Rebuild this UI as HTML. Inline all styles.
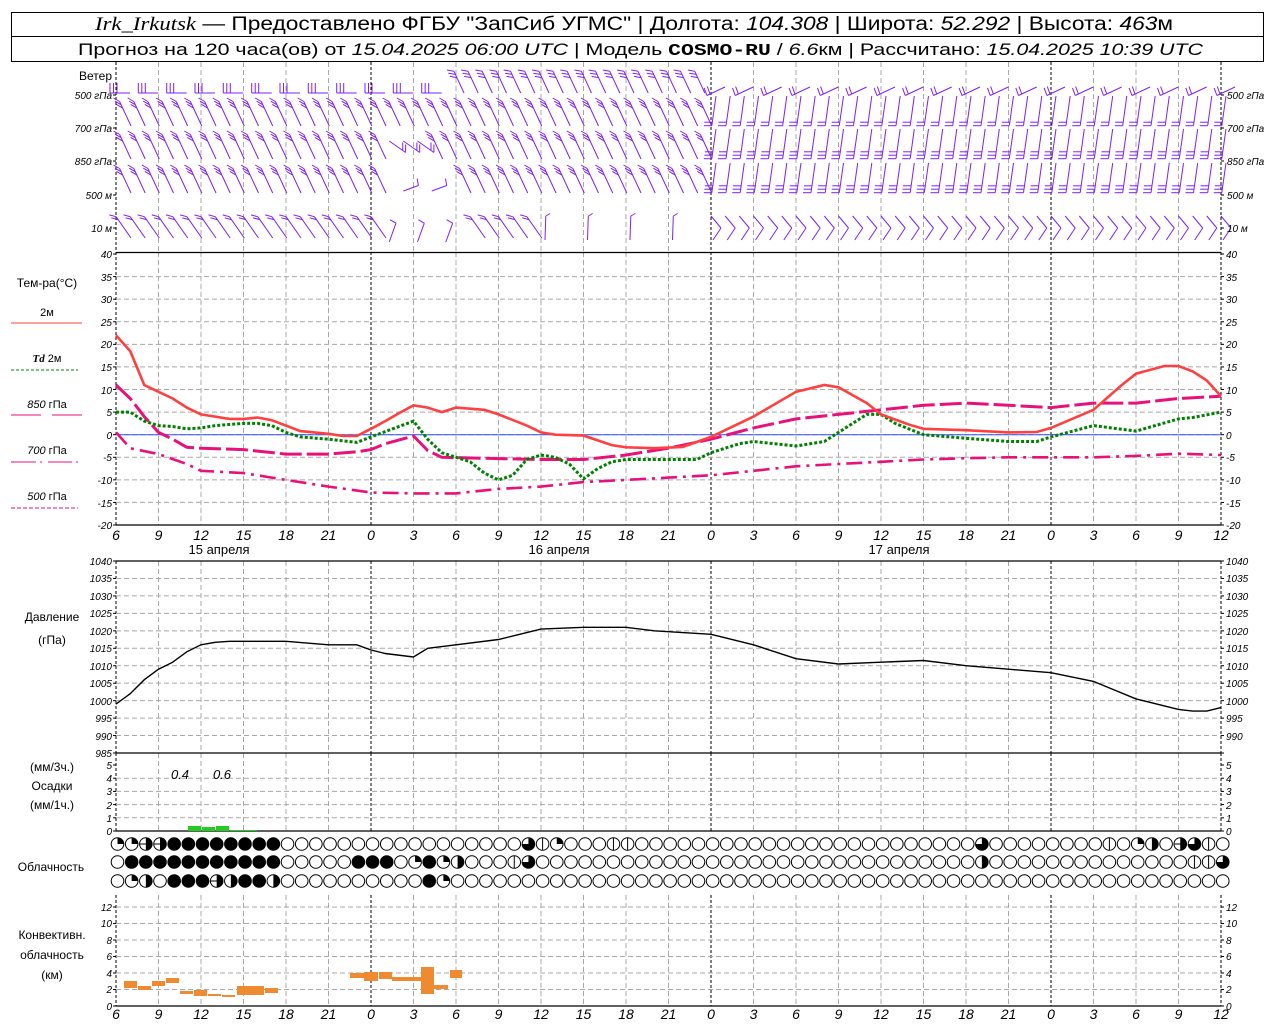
<!DOCTYPE html>
<html><head><meta charset="utf-8"><style>
html,body{margin:0;padding:0;background:#fff;width:1280px;height:1024px;overflow:hidden}
svg{display:block}
text{font-family:"Liberation Sans",sans-serif;fill:#000}
.ax{font-size:10px;font-style:italic}
.axl{font-size:10px;font-style:italic;text-anchor:end}
.xl{font-size:14px;font-style:italic;text-anchor:middle}
.lb{font-size:12px;text-anchor:middle}
</style></head><body>
<svg id="s" width="1280" height="1024" viewBox="0 0 1280 1024" xmlns="http://www.w3.org/2000/svg">
<rect x="11.5" y="12.5" width="1252" height="49" fill="none" stroke="#000"/>
<line x1="11" y1="36.5" x2="1264" y2="36.5" stroke="#000"/>
<text x="95" y="30" font-size="19" textLength="1078" lengthAdjust="spacingAndGlyphs"><tspan font-style="italic" font-family="Liberation Serif">Irk_Irkutsk</tspan> — Предоставлено ФГБУ "ЗапСиб УГМС" | Долгота: <tspan font-style="italic">104.308</tspan> | Широта: <tspan font-style="italic">52.292</tspan> | Высота: <tspan font-style="italic">463</tspan>м</text>
<text x="78" y="55" font-size="16.5" textLength="1125" lengthAdjust="spacingAndGlyphs">Прогноз на 120 часа(ов) от <tspan font-style="italic">15.04.2025 06:00 UTC</tspan>  | Модель <tspan font-weight="bold" font-family="Liberation Mono">COSMO-RU</tspan> / <tspan font-style="italic">6.6</tspan>км | Рассчитано: <tspan font-style="italic">15.04.2025 10:39 UTC</tspan></text>
<g id="grid"></g>
<g id="data"></g>
<text x="112" y="80" font-size="12" text-anchor="end">Ветер</text>
<text x="112" y="99" class="axl">500 гПа</text>
<text x="112" y="132" class="axl">700 гПа</text>
<text x="112" y="165" class="axl">850 гПа</text>
<text x="112" y="199" class="axl">500  м</text>
<text x="112" y="232" class="axl">10   м</text>
<text x="1227" y="99" class="ax">500 гПа</text>
<text x="1227" y="132" class="ax">700 гПа</text>
<text x="1227" y="165" class="ax">850 гПа</text>
<text x="1227" y="199" class="ax">500  м</text>
<text x="1227" y="232" class="ax">10   м</text>
<g class="axl"><text x="112" y="258">40</text><text x="112" y="281">35</text><text x="112" y="303">30</text><text x="112" y="326">25</text><text x="112" y="348">20</text><text x="112" y="371">15</text><text x="112" y="394">10</text><text x="112" y="416">5</text><text x="112" y="439">0</text><text x="112" y="461">-5</text><text x="112" y="484">-10</text><text x="112" y="507">-15</text><text x="112" y="529">-20</text></g>
<g class="ax"><text x="1226" y="258">40</text><text x="1226" y="281">35</text><text x="1226" y="303">30</text><text x="1226" y="326">25</text><text x="1226" y="348">20</text><text x="1226" y="371">15</text><text x="1226" y="394">10</text><text x="1226" y="416">5</text><text x="1226" y="439">0</text><text x="1226" y="461">-5</text><text x="1226" y="484">-10</text><text x="1226" y="507">-15</text><text x="1226" y="529">-20</text></g>
<g class="xl"><text x="116" y="540">6</text><text x="158.5" y="540">9</text><text x="201" y="540">12</text><text x="243.5" y="540">15</text><text x="286" y="540">18</text><text x="328.5" y="540">21</text><text x="371" y="540">0</text><text x="413.5" y="540">3</text><text x="456" y="540">6</text><text x="498.5" y="540">9</text><text x="541" y="540">12</text><text x="583.5" y="540">15</text><text x="626" y="540">18</text><text x="668.5" y="540">21</text><text x="711" y="540">0</text><text x="753.5" y="540">3</text><text x="796" y="540">6</text><text x="838.5" y="540">9</text><text x="881" y="540">12</text><text x="923.5" y="540">15</text><text x="966" y="540">18</text><text x="1008.5" y="540">21</text><text x="1051" y="540">0</text><text x="1093.5" y="540">3</text><text x="1136" y="540">6</text><text x="1178.5" y="540">9</text><text x="1221" y="540">12</text></g>
<text x="219" y="554" font-size="13" text-anchor="middle">15 апреля</text>
<text x="559" y="554" font-size="13" text-anchor="middle">16 апреля</text>
<text x="899" y="554" font-size="13" text-anchor="middle">17 апреля</text>
<text x="47" y="287" class="lb">Тем-ра(°C)</text>
<text x="47" y="316" font-size="11" text-anchor="middle">2м</text>
<line x1="11" y1="323" x2="82" y2="323" stroke="#ff4040"/>
<text x="47" y="362" font-size="11" text-anchor="middle"><tspan font-style="italic" font-weight="bold" font-family="Liberation Serif">Td</tspan>  2м</text>
<line x1="11" y1="370" x2="78" y2="370" stroke="#008000" stroke-dasharray="3,2"/>
<text x="47" y="408" font-size="11" text-anchor="middle"><tspan font-style="italic">850</tspan> гПа</text>
<path d="M11 415H41M52 415H82" stroke="#e8107a"/>
<text x="47" y="454" font-size="11" text-anchor="middle"><tspan font-style="italic">700</tspan> гПа</text>
<path d="M11 462H36M40 462H42M48 462H72M76 462H78" stroke="#e8107a"/>
<text x="47" y="500" font-size="11" text-anchor="middle"><tspan font-style="italic">500</tspan> гПа</text>
<line x1="11" y1="508" x2="78" y2="508" stroke="#e8107a" stroke-dasharray="4,2"/>
<g class="axl"><text x="112" y="565">1040</text><text x="112" y="582">1035</text><text x="112" y="600">1030</text><text x="112" y="617">1025</text><text x="112" y="635">1020</text><text x="112" y="652">1015</text><text x="112" y="670">1010</text><text x="112" y="687">1005</text><text x="112" y="705">1000</text><text x="112" y="722">995</text><text x="112" y="740">990</text><text x="112" y="757">985</text></g>
<g class="ax"><text x="1226" y="565">1040</text><text x="1226" y="582">1035</text><text x="1226" y="600">1030</text><text x="1226" y="617">1025</text><text x="1226" y="635">1020</text><text x="1226" y="652">1015</text><text x="1226" y="670">1010</text><text x="1226" y="687">1005</text><text x="1226" y="705">1000</text><text x="1226" y="722">995</text><text x="1226" y="740">990</text></g>
<text x="52" y="621" class="lb">Давление</text>
<text x="52" y="644" class="lb">(гПа)</text>
<g class="axl"><text x="112" y="769">5</text><text x="112" y="782">4</text><text x="112" y="795">3</text><text x="112" y="809">2</text><text x="112" y="822">1</text><text x="112" y="835">0</text></g>
<g class="ax"><text x="1226" y="769">5</text><text x="1226" y="782">4</text><text x="1226" y="795">3</text><text x="1226" y="809">2</text><text x="1226" y="822">1</text><text x="1226" y="835">0</text></g>
<text x="52" y="771" class="lb">(мм/3ч.)</text>
<text x="52" y="790" class="lb">Осадки</text>
<text x="52" y="809" class="lb">(мм/1ч.)</text>
<text x="180" y="779" font-size="13" font-style="italic" text-anchor="middle">0.4</text>
<text x="222" y="779" font-size="13" font-style="italic" text-anchor="middle">0.6</text>
<text x="51" y="871" class="lb">Облачность</text>
<g class="axl"><text x="112" y="911">12</text><text x="112" y="927">10</text><text x="112" y="944">8</text><text x="112" y="960">6</text><text x="112" y="977">4</text><text x="112" y="993">2</text><text x="112" y="1010">0</text></g>
<g class="ax"><text x="1226" y="911">12</text><text x="1226" y="927">10</text><text x="1226" y="944">8</text><text x="1226" y="960">6</text><text x="1226" y="977">4</text><text x="1226" y="993">2</text><text x="1226" y="1010">0</text></g>
<text x="52" y="939" class="lb">Конвективн.</text>
<text x="52" y="959" class="lb">облачность</text>
<text x="52" y="979" class="lb">(км)</text>
<g class="xl"><text x="116" y="1019">6</text><text x="158.5" y="1019">9</text><text x="201" y="1019">12</text><text x="243.5" y="1019">15</text><text x="286" y="1019">18</text><text x="328.5" y="1019">21</text><text x="371" y="1019">0</text><text x="413.5" y="1019">3</text><text x="456" y="1019">6</text><text x="498.5" y="1019">9</text><text x="541" y="1019">12</text><text x="583.5" y="1019">15</text><text x="626" y="1019">18</text><text x="668.5" y="1019">21</text><text x="711" y="1019">0</text><text x="753.5" y="1019">3</text><text x="796" y="1019">6</text><text x="838.5" y="1019">9</text><text x="881" y="1019">12</text><text x="923.5" y="1019">15</text><text x="966" y="1019">18</text><text x="1008.5" y="1019">21</text><text x="1051" y="1019">0</text><text x="1093.5" y="1019">3</text><text x="1136" y="1019">6</text><text x="1178.5" y="1019">9</text><text x="1221" y="1019">12</text></g>
</svg>
<script>
var NS="http://www.w3.org/2000/svg";
var G=document.getElementById("grid"),D=document.getElementById("data");
function el(p,t,a){var e=document.createElementNS(NS,t);for(var k in a)e.setAttribute(k,a[k]);p.appendChild(e);return e;}
function X(h){return 116+(h-6)*14.1667;}
function tY(v){return 254+(40-v)*4.517;}
function pY(v){return 561+(1040-v)*3.491;}
var L=116,R=1221;
var segs=[[62,252],[252,525],[561,753],[753,831],[895,1006]];
for(var i=0;i<=26;i++){var x=L+i*42.5;var day=(i%8==6)||i==0||i==26;
 segs.forEach(function(s){el(G,"line",{x1:x,y1:s[0],x2:x,y2:s[1],stroke:day?"#000":"#a8a8a8","stroke-dasharray":day?"3,2":"5,3","stroke-width":1});});
}
function hgrid(y){el(G,"line",{x1:L,y1:y,x2:R,y2:y,stroke:"#a8a8a8","stroke-dasharray":"5,3"});}
for(var v=35;v>-20;v-=5)hgrid(tY(v));
for(var v=1035;v>985;v-=5)hgrid(pY(v));
for(var v=1;v<5;v++)hgrid(831-v*13.2);
for(var v=2;v<=12;v+=2)hgrid(1006-v*8.25);
el(G,"line",{x1:L,y1:434.7,x2:R,y2:434.7,stroke:"#3050ff","stroke-width":1});
function solid(y){el(G,"line",{x1:L,y1:y,x2:R,y2:y,stroke:"#000","stroke-width":1.3});}
[252.5,525,561,753,831,1006].forEach(solid);
function ticks(a){a.forEach(function(y){el(G,"line",{x1:L-3,y1:y,x2:L,y2:y,stroke:"#000"});el(G,"line",{x1:R,y1:y,x2:R+3,y2:y,stroke:"#000"});});}
var tk=[];for(v=40;v>=-20;v-=5)tk.push(tY(v));for(v=1040;v>=985;v-=5)tk.push(pY(v));for(v=0;v<=5;v++)tk.push(831-v*13.2);for(v=0;v<=12;v+=2)tk.push(1006-v*8.25);[95,128,161,195,228].forEach(function(y){tk.push(y)});ticks(tk);
function path(pts,f,style){var d="";pts.forEach(function(p,i){d+=(i?"L":"M")+X(p[0]).toFixed(1)+" "+f(p[1]).toFixed(1);});var a={d:d,fill:"none"};for(var k in style)a[k]=style[k];el(D,"path",a);}
var t2=[[6,22],[7,18.5],[8,11],[9,9.5],[10,8],[11,6],[12,4.5],[13,4],[14,3.5],[15,3.5],[16,3.8],[17,3.2],[18,2],[19,0.8],[20,0.5],[21,0.2],[22,-0.3],[23,-0.3],[24,1.3],[25,3],[26,4.8],[27,6.5],[28,6],[29,5],[30,6],[32,5.5],[33,4.5],[35,2],[36,0.5],[37,0],[39,-0.2],[41,-2.3],[42,-2.8],[44,-3],[46,-2.7],[48,-0.5],[51,4],[54,9.5],[56,11],[57,10.5],[59,7],[60,4.5],[62,2.2],[63,1.3],[66,1],[69,0.5],[71,0.6],[72,1.5],[75,5.5],[77,11],[78,13.5],[80,15.2],[81,15.2],[82,14],[83,12],[84,8.5]];
var td=[[6,5],[7,5],[8,3],[9,2],[10,1.8],[11,1.3],[12,1.5],[13,2],[15,2.5],[16,2.5],[17,2],[18,0.5],[19,-0.5],[21,-1],[23,-1.7],[24,-0.5],[27,3],[28,-1],[29,-4],[30,-5],[31,-6],[32,-8.5],[33,-10],[34,-9],[35,-5.5],[36,-4.5],[37,-5],[38,-6.5],[39,-9.8],[40,-7.5],[41,-6],[42,-5.5],[45,-5.5],[47,-5.5],[48,-4],[50,-2],[51,-1.5],[54,-2.5],[56,-1.5],[57,0.5],[59,4.5],[60,4.5],[61,2.5],[63,0],[66,-0.8],[69,-1.5],[71,-1.5],[72,-0.5],[75,2],[78,0.8],[81,3.5],[82,3.8],[84,5]];
var p850=[[6,11],[7,8],[7.5,6],[8,4],[9,0.5],[10,-1],[11,-2.8],[12,-3],[15,-3.3],[18,-4.3],[21,-4.3],[23,-3.8],[24,-3.3],[25,-2],[27,-0.3],[28,-3.5],[29,-5],[33,-5.3],[36,-5.5],[39,-5.5],[42,-4.5],[45,-3],[48,-1],[51,1.5],[54,3.5],[57,4.5],[60,5.5],[63,6.5],[66,7],[69,6.5],[72,6],[75,7],[78,7],[81,8],[84,8.5]];
var p700=[[6,0.5],[7,-3],[9,-4.3],[11,-6.5],[12,-8],[15,-8.5],[17,-9.5],[18,-10],[21,-11.5],[24,-12.8],[27,-13],[30,-13],[33,-12],[36,-11.5],[39,-10.5],[42,-10],[45,-9.5],[48,-9],[51,-8],[54,-7],[57,-6.5],[60,-6],[63,-5.5],[66,-5.2],[69,-5],[72,-5],[75,-5],[78,-4.7],[81,-4.2],[84,-4.5]];
path(p700,tY,{stroke:"#e8107a","stroke-width":2.6,"stroke-dasharray":"16,6,3,6"});
path(p850,tY,{stroke:"#e8107a","stroke-width":3,"stroke-dasharray":"22,5"});
path(td,tY,{stroke:"#008000","stroke-width":3,"stroke-dasharray":"3,2"});
path(t2,tY,{stroke:"#ff4040","stroke-width":2.6});
var pr=[[6,999],[7,1002],[8,1006],[9,1009],[10,1011],[11,1014],[12,1016],[13,1016.7],[14,1017],[15,1017],[18,1017],[21,1016],[23,1016],[24,1014.5],[25,1013.5],[27,1012.5],[28,1015],[30,1016],[33,1017.5],[35,1019.5],[36,1020.5],[39,1021],[42,1021],[44,1020],[46,1019.5],[48,1019],[51,1016],[54,1012],[57,1010.5],[60,1011],[63,1011.5],[66,1010],[69,1009],[72,1008],[75,1005.5],[78,1000.5],[81,997.5],[82,997],[83,997],[84,998]];
path(pr,pY,{stroke:"#000","stroke-width":1.4});
[[188,826,13],[202,827,13],[216,826,13],[230,830,27]].forEach(function(b){el(D,"rect",{x:b[0],y:b[1],width:b[2],height:831-b[1],fill:"#22cc22"});});
[[124,981,13,7],[138,986,13,4],[152,981,13,5],[166,978,13,5],[180,991,13,3],[194,990,13,6],[208,994,13,2],[222,995,13,2],[237,986,27,9],[265,988,13,5],[350,973,14,5],[364,972,14,9],[379,972,13,7],[392,977,29,4],[421,967,13,27],[434,985,14,4],[450,970,12,8]].forEach(function(b){el(D,"rect",{x:b[0],y:b[1],width:b[2],height:b[3],fill:"#f08a30"});});
function circ(i,y,t){var cx=117.5+i*14.17,r=6.3;el(D,"circle",{cx:cx,cy:y,r:r,fill:"#fff",stroke:"#000","stroke-width":1});
 var d=null;
 if(t=="f")el(D,"circle",{cx:cx,cy:y,r:r,fill:"#000"});
 else if(t=="q")d="M"+cx+" "+y+"V"+(y-r)+"A"+r+" "+r+" 0 0 1 "+(cx+r)+" "+y+"Z";
 else if(t=="h")d="M"+cx+" "+(y-r)+"A"+r+" "+r+" 0 0 1 "+cx+" "+(y+r)+"Z";
 else if(t=="t")d="M"+cx+" "+y+"V"+(y-r)+"A"+r+" "+r+" 0 1 1 "+(cx-r)+" "+y+"Z";
 else if(t=="v"){el(D,"line",{x1:cx,y1:y-r,x2:cx,y2:y+r,stroke:"#000"});}
 else if(t=="e"){el(D,"line",{x1:cx-r,y1:y,x2:cx+r,y2:y,stroke:"#000"});el(D,"path",{d:"M"+cx+" "+(y-r)+"A"+r+" "+r+" 0 0 1 "+cx+" "+(y+r)+"Z",fill:"#000"});}
 if(d)el(D,"path",{d:d,fill:"#000"});}
function row(y,spec){for(var i=0;i<=78;i++)circ(i,y,spec[i]||"o");}
var r1={0:"q",1:"q",2:"e",3:"e"};for(var i=4;i<=11;i++)r1[i]="f";r1[29]="t";r1[30]="v";r1[31]="q";r1[35]="v";r1[36]="v";r1[61]="t";r1[70]="v";r1[72]="q";r1[73]="h";r1[75]="e";r1[76]="t";r1[77]="v";
var r2={};for(i=1;i<=11;i++)r2[i]="f";r2[17]="f";r2[18]="f";r2[19]="f";r2[21]="q";r2[22]="f";r2[23]="q";r2[24]="h";r2[28]="v";r2[29]="t";r2[61]="h";r2[76]="v";r2[77]="v";r2[78]="t";
var r3={1:"q",2:"h",4:"f",5:"f",6:"f",7:"e",8:"h",9:"f",10:"f",11:"h",22:"f",23:"q"};
row(844,r1);row(862,r2);row(881,r3);
var W="#8020f0";
function ln(x1,y1,x2,y2){el(D,"line",{x1:x1.toFixed(1),y1:y1.toFixed(1),x2:x2.toFixed(1),y2:y2.toFixed(1),stroke:W,"stroke-width":1});}
function barb(x,y,ang,len,nf,fa,fl){var a=ang*Math.PI/180,dx=Math.cos(a),dy=Math.sin(a);var tx=x+dx*len,ty=y+dy*len;ln(x,y,tx,ty);
 var b=fa*Math.PI/180;for(var k=0;k<nf;k++){var sx=tx-dx*k*3.5,sy=ty-dy*k*3.5;ln(sx,sy,sx+Math.cos(b)*fl,sy+Math.sin(b)*fl);}}
var rows=[95,128,161,195,228];
for(var h=6;h<=84;h++){var x=X(h)+4;
 rows.forEach(function(y,ri){
  if(ri==0){
   if(h<30){ if(h%2==0) barb(x+10,y-2,180,20,3,-90,10);}
   else if(h<48)barb(x+4,y-2,-115,24,3,-170,7);
   else { if(h%2==0) barb(x+10,y-8,155,20,2,-110,8);}
  }else if(ri<4){
   if(h<48){
     if(ri==3&&h>=25&&h<30){ if(h%2==0) barb(x,y-4,-20,16,1,-100,7);}
     else if(ri==2&&h>=25&&h<28) barb(x,y-20,35,20,2,-90,8);
     else barb(x+11,y-2,-115,27,ri==1?3:3,-150,7);}
   else barb(x+1,y-32,98,30,ri==1?2:3,180,8);
  }else{
   if(h<36){ if(h>=25&&h<31){ if(h%2==1) barb(x,y+14,-70,20,1,-150,7);} else barb(x+11,y+10,-125,26,2,-165,7);}
   else if(h<48){ if(h%3==0) barb(x,y+12,-88,24,1,-30,5);}
   else {ln(x-4,y-12,x+6,y);ln(x+6,y,x-2,y+12);}
  }
 });
}
</script>
</body></html>
